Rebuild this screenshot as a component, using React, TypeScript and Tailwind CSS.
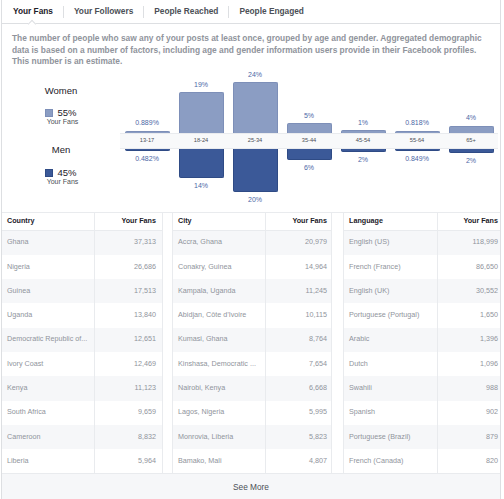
import React from 'react';

const tabs = ['Your Fans', 'Your Followers', 'People Reached', 'People Engaged'];

const ages = [
  { age: '13-17', w: '0.889%', wh: 2, m: '0.482%', mh: 2 },
  { age: '18-24', w: '19%', wh: 40.5, m: '14%', mh: 29 },
  { age: '25-34', w: '24%', wh: 50.5, m: '20%', mh: 43 },
  { age: '35-44', w: '5%', wh: 9.5, m: '6%', mh: 11.5 },
  { age: '45-54', w: '1%', wh: 2.5, m: '2%', mh: 3.5 },
  { age: '55-64', w: '0.818%', wh: 2, m: '0.849%', mh: 2 },
  { age: '65+', w: '4%', wh: 7, m: '2%', mh: 4 },
];

const countries: [string, string][] = [
  ['Ghana', '37,313'],
  ['Nigeria', '26,686'],
  ['Guinea', '17,513'],
  ['Uganda', '13,840'],
  ['Democratic Republic of...', '12,651'],
  ['Ivory Coast', '12,469'],
  ['Kenya', '11,123'],
  ['South Africa', '9,659'],
  ['Cameroon', '8,832'],
  ['Liberia', '5,964'],
];

const cities: [string, string][] = [
  ['Accra, Ghana', '20,979'],
  ['Conakry, Guinea', '14,964'],
  ['Kampala, Uganda', '11,245'],
  ['Abidjan, Côte d’Ivoire', '10,115'],
  ['Kumasi, Ghana', '8,764'],
  ['Kinshasa, Democratic ...', '7,654'],
  ['Nairobi, Kenya', '6,668'],
  ['Lagos, Nigeria', '5,995'],
  ['Monrovia, Liberia', '5,823'],
  ['Bamako, Mali', '4,807'],
];

const languages: [string, string][] = [
  ['English (US)', '118,999'],
  ['French (France)', '86,650'],
  ['English (UK)', '30,552'],
  ['Portuguese (Portugal)', '1,650'],
  ['Arabic', '1,396'],
  ['Dutch', '1,096'],
  ['Swahili', '988'],
  ['Spanish', '902'],
  ['Portuguese (Brazil)', '879'],
  ['French (Canada)', '820'],
];

interface TableProps {
  title: string;
  rows: [string, string][];
  className: string;
  nameWidth: string;
  pr: string;
}

const StatTable: React.FC<TableProps> = ({ title, rows, className, nameWidth, pr }) => (
  <div className={`flex flex-col ${className}`}>
    <div className="flex h-[18px] border-b border-[#e9ebee] text-[7.2px] font-bold text-[#1d2129]">
      <div className={`${nameWidth} shrink-0 border-r border-[#e9ebee] pl-[5px] flex items-center`}>{title}</div>
      <div className={`flex-1 flex items-center justify-end ${pr}`}>Your Fans</div>
    </div>
    {rows.map(([name, fans], i) => (
      <div
        key={name}
        className={`flex h-[24.3px] text-[7.2px] text-[#90949c] ${i % 2 === 0 ? 'bg-[#f6f7f9]' : 'bg-white'}`}
      >
        <div className={`${nameWidth} shrink-0 border-r border-[#e9ebee] pl-[5px] flex items-center whitespace-nowrap overflow-hidden`}>
          {name}
        </div>
        <div className={`flex-1 flex items-center justify-end ${pr}`}>{fans}</div>
      </div>
    ))}
  </div>
);

const App: React.FC = () => {
  return (
    <div className="ml-px w-[500px] border-x border-[#dddfe2] bg-white font-['Liberation_Sans',Arial,sans-serif]">
      {/* tabs */}
      <div className="relative flex h-[24px] items-center border-b border-[#dddfe2] pl-px">
        {tabs.map((t, i) => (
          <div key={t} className="flex items-center">
            {i > 0 && <div className="h-[12px] w-px bg-[#dddfe2]" />}
            <div className={`px-[10px] text-[8.3px] font-bold ${i === 0 ? 'text-[#1d2129]' : 'text-[#4b4f56]'}`}>{t}</div>
          </div>
        ))}
        <div className="absolute bottom-[-4px] left-[27px] h-[6px] w-[6px] rotate-45 border-l border-t border-[#dddfe2] bg-white" />
      </div>

      {/* description */}
      <p className="px-[10px] pt-[9px] text-[8.4px] font-bold leading-[11.5px] text-[#90949c] whitespace-nowrap">
        The number of people who saw any of your posts at least once, grouped by age and gender. Aggregated demographic
        <br />
        data is based on a number of factors, including age and gender information users provide in their Facebook profiles.
        <br />
        This number is an estimate.
      </p>

      {/* chart */}
      <div className="flex h-[144px]">
        <div className="flex w-[118px] shrink-0 flex-col items-center text-[#1d2129]">
          <div className="mt-[17px] text-[9.5px] leading-[12px]">Women</div>
          <div className="mt-[11px] flex h-[10px] items-center gap-[4px]">
            <span className="h-[8px] w-[8px] bg-[#8b9dc3] border border-[#7d8fb8]" />
            <span className="text-[9.5px] leading-[10px]">55%</span>
          </div>
          <div className="text-[7px] leading-[7px] text-[#4b4f56] pl-[3px]">Your Fans</div>
          <div className="mt-[19.5px] text-[9.5px] leading-[12px]">Men</div>
          <div className="mt-[11.5px] flex h-[10px] items-center gap-[4px]">
            <span className="h-[8px] w-[8px] bg-[#3b5998] border border-[#2f4b85]" />
            <span className="text-[9.5px] leading-[10px]">45%</span>
          </div>
          <div className="text-[7px] leading-[7px] text-[#4b4f56] pl-[3px]">Your Fans</div>
        </div>

        <div className="mr-[3px] flex flex-1 flex-col">
          <div className="flex h-[65px]">
            {ages.map((a) => (
              <div key={a.age} className="flex w-[54px] flex-col items-center justify-end">
                <div className="mb-[3.5px] text-[7px] leading-[9px] text-[#4c67a6]">{a.w}</div>
                <div
                  className="w-[45px] rounded-t-[2px] border border-b-0 border-[#7d8fb8] bg-[#8b9dc3]"
                  style={{ height: a.wh }}
                />
              </div>
            ))}
          </div>
          <div className="flex h-[16px] border-y border-[#e9ebee] bg-[#f8f9fa]">
            {ages.map((a) => (
              <div key={a.age} className="flex w-[54px] items-center justify-center text-[5.7px] text-[#4b4f56]">
                {a.age}
              </div>
            ))}
          </div>
          <div className="flex">
            {ages.map((a) => (
              <div key={a.age} className="flex w-[54px] flex-col items-center">
                <div
                  className="w-[45px] rounded-b-[2px] border border-t-0 border-[#2f4b85] bg-[#3b5998]"
                  style={{ height: a.mh }}
                />
                <div className="mt-[3px] text-[7px] leading-[9px] text-[#4c67a6]">{a.m}</div>
              </div>
            ))}
          </div>
        </div>
      </div>

      {/* tables */}
      <div className="flex border-t border-[#e9ebee]">
        <StatTable title="Country" rows={countries} className="w-[161px] border-r border-[#e9ebee]" nameWidth="w-[93px]" pr="pr-[6px]" />
        <div className="w-[9px] shrink-0" />
        <StatTable title="City" rows={cities} className="w-[160px] border-x border-[#e9ebee]" nameWidth="w-[93px]" pr="pr-[4px]" />
        <div className="w-[11px] shrink-0" />
        <StatTable title="Language" rows={languages} className="w-[157px] border-l border-[#e9ebee]" nameWidth="w-[94px]" pr="pr-[2px]" />
      </div>

      <div className="flex h-[30px] items-start justify-center border-t border-[#e9ebee] bg-[#f6f7f9] pt-[8px] text-[8.3px] leading-[10px] text-[#4b4f56]">
        See More
      </div>
    </div>
  );
};

export default App;
